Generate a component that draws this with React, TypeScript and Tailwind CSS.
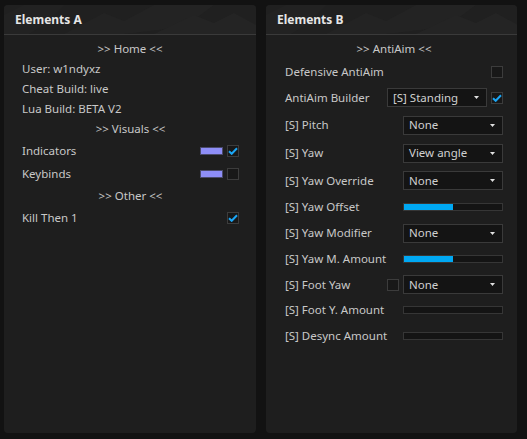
import React from "react"

const font = { fontFamily: '"Noto Sans", "Open Sans", sans-serif' }

function Check({ on }: { on?: boolean }) {
  return (
    <div className="w-[12px] h-[12px] border border-[#3c3c3c] bg-[#181818] flex items-center justify-center shrink-0">
      {on && (
        <svg width="10" height="8" viewBox="0 0 10 8">
          <path d="M1 4.2 L3.7 6.8 L9 1.2" fill="none" stroke="#1ba6f5" strokeWidth="2" />
        </svg>
      )}
    </div>
  )
}

function Swatch() {
  return <div className="w-[23px] h-[8px] bg-[#8e8ef7] border border-[#4a4a6a]" />
}

function Dropdown({ value }: { value: string }) {
  return (
    <div className="w-[100px] h-[19px] bg-[#141414] border border-[#3a3a3a] flex items-center justify-between pl-[5px] pr-[7px] text-[#d0d0d0]">
      <span className="leading-none">{value}</span>
      <svg width="5" height="3" viewBox="0 0 5 3">
        <path d="M0 0 H5 L2.5 3 Z" fill="#e0e0e0" />
      </svg>
    </div>
  )
}

function Slider({ pct }: { pct: number }) {
  return (
    <div className="w-[100px] h-[8px] bg-[#141414] border border-[#363636]">
      <div className="h-full bg-[#00a8f3]" style={{ width: `${pct}%` }} />
    </div>
  )
}

function Header({ title }: { title: string }) {
  return (
    <div className="relative h-[30px] bg-[#202020] border-b border-[#3a3a3a] overflow-hidden rounded-t-[4px]">
      <svg className="absolute inset-0" width="252" height="29" viewBox="0 0 252 29" preserveAspectRatio="none">
        <polygon points="60,29 100,8 120,16 150,0 210,0 180,22 120,29" fill="#232323" />
        <polygon points="0,10 20,0 60,0 40,20 25,29 0,29" fill="#222222" />
        <polygon points="150,29 190,10 210,18 230,8 252,20 252,29" fill="#242424" />
      </svg>
      <div className="relative pl-[11px] h-full flex items-center text-[12px] font-bold text-[#e6e6e6]">{title}</div>
    </div>
  )
}

function Row({ h, children, center }: { h: string; children: React.ReactNode; center?: boolean }) {
  return (
    <div className={`${h} flex items-center ${center ? "justify-center" : "justify-between"}`}>{children}</div>
  )
}

export default function App() {
  return (
    <div style={font} className="w-[527px] h-[439px] bg-[#121212] flex gap-[10px] pl-[4px] pt-[5px] pb-[6px] text-[11.5px] text-[#c8c8c8]">
      <div className="w-[252px] bg-[#1e1e1e] rounded-[4px] flex flex-col">
        <Header title="Elements A" />
        <div className="pt-[3px] pl-[18px] pr-[17px] flex flex-col">
          <Row h="h-[21px]" center><span className="pr-[1px]">&gt;&gt; Home &lt;&lt;</span></Row>
          <Row h="h-[20px]"><span>User: w1ndyxz</span></Row>
          <Row h="h-[20px]"><span>Cheat Build: live</span></Row>
          <Row h="h-[20px]"><span>Lua Build: BETA V2</span></Row>
          <Row h="h-[20px]" center><span>&gt;&gt; Visuals &lt;&lt;</span></Row>
          <Row h="h-[23px]">
            <span>Indicators</span>
            <div className="flex items-center gap-[4px]"><Swatch /><Check on /></div>
          </Row>
          <Row h="h-[23px]">
            <span>Keybinds</span>
            <div className="flex items-center gap-[4px]"><Swatch /><Check /></div>
          </Row>
          <Row h="h-[22px]" center><span>&gt;&gt; Other &lt;&lt;</span></Row>
          <Row h="h-[22px]">
            <span>Kill Then 1</span>
            <Check on />
          </Row>
        </div>
      </div>

      <div className="w-[251px] bg-[#1e1e1e] rounded-[4px] flex flex-col">
        <Header title="Elements B" />
        <div className="pt-[3px] pl-[19px] pr-[14px] flex flex-col">
          <Row h="h-[21px]" center><span>&gt;&gt; AntiAim &lt;&lt;</span></Row>
          <Row h="h-[25px]">
            <span>Defensive AntiAim</span>
            <Check />
          </Row>
          <Row h="h-[27px]">
            <span>AntiAim Builder</span>
            <div className="flex items-center gap-[4px]"><Dropdown value="[S] Standing" /><Check on /></div>
          </Row>
          <Row h="h-[28px]"><span>[S] Pitch</span><Dropdown value="None" /></Row>
          <Row h="h-[28px]"><span>[S] Yaw</span><Dropdown value="View angle" /></Row>
          <Row h="h-[27px]"><span>[S] Yaw Override</span><Dropdown value="None" /></Row>
          <Row h="h-[26px]"><span>[S] Yaw Offset</span><Slider pct={50} /></Row>
          <Row h="h-[26px]"><span>[S] Yaw Modifier</span><Dropdown value="None" /></Row>
          <Row h="h-[26px]"><span>[S] Yaw M. Amount</span><Slider pct={50} /></Row>
          <Row h="h-[25px]">
            <span>[S] Foot Yaw</span>
            <div className="flex items-center gap-[4px]"><Check /><Dropdown value="None" /></div>
          </Row>
          <Row h="h-[26px]"><span>[S] Foot Y. Amount</span><Slider pct={0} /></Row>
          <Row h="h-[25px]"><span>[S] Desync Amount</span><Slider pct={0} /></Row>
        </div>
      </div>
    </div>
  )
}
